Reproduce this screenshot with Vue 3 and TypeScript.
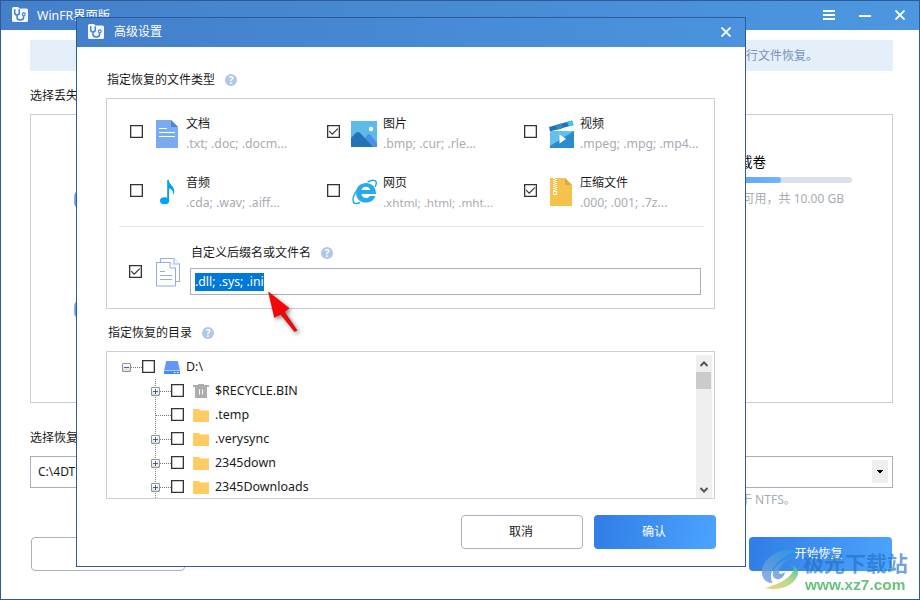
<script setup lang="ts">
interface FileType {
  icon: 'doc' | 'image' | 'video' | 'audio' | 'web' | 'zip'
  title: string
  exts: string
  checked: boolean
}

interface TreeNode {
  label: string
  kind: 'bin' | 'folder'
  expandable: boolean
}

const fileTypes: FileType[] = [
  { icon: 'doc', title: '文档', exts: '.txt; .doc; .docm...', checked: false },
  { icon: 'image', title: '图片', exts: '.bmp; .cur; .rle...', checked: true },
  { icon: 'video', title: '视频', exts: '.mpeg; .mpg; .mp4...', checked: false },
  { icon: 'audio', title: '音频', exts: '.cda; .wav; .aiff...', checked: false },
  { icon: 'web', title: '网页', exts: '.xhtml; .html; .mht...', checked: false },
  { icon: 'zip', title: '压缩文件', exts: '.000; .001; .7z...', checked: true },
]

const nodes: TreeNode[] = [
  { label: '$RECYCLE.BIN', kind: 'bin', expandable: true },
  { label: '.temp', kind: 'folder', expandable: false },
  { label: '.verysync', kind: 'folder', expandable: true },
  { label: '2345down', kind: 'folder', expandable: true },
  { label: '2345Downloads', kind: 'folder', expandable: true },
]
</script>

<template>
  <div class="window">
    <header class="titlebar">
      <svg class="logo" viewBox="0 0 16 16"><path d="M0 1.5Q0 0 1.5 0H6l1.500 1.500h7Q16 1.500 16 3v10.500Q16 15 14.500 15h-13Q0 15 0 13.500Z" fill="#f4f8fd" /><path d="M3.500 3H2.700v2.500a2.300 2.500 0 0 0 4.600 0V3H6.500M5 8v2.200a3.300 2.800 0 0 0 6.600 0V8.500" fill="none" stroke="#3e83d4" stroke-width="1.500" /><circle cx="11.800" cy="7.300" r="1.400" fill="none" stroke="#3e83d4" stroke-width="1.100" /></svg>
      <span class="titletext main-title">WinFR界面版</span>
      <svg class="menu" viewBox="0 0 12 10"><path d="M0 1h12M0 5h12M0 9h12" stroke="#fff" stroke-width="2" /></svg>
      <svg class="mini" viewBox="0 0 12 10"><path d="M0 6h12" stroke="#fff" stroke-width="2" /></svg>
      <svg class="close" viewBox="0 0 10 10"><path d="M.5.5l9 9M9.500.5l-9 9" stroke="#fff" stroke-width="1.900" /></svg>
    </header>

    <main class="content">
      <div class="banner">进行文件恢复。</div>
      <div class="label lost">选择丢失</div>
      <section class="volumes">
        <div class="drives"><i></i><i></i></div>
        <div class="volume">
          <div class="vname">下载卷</div>
          <div class="bar"><span></span></div>
          <div class="vsize">可用，共 10.00 GB</div>
        </div>
      </section>
      <div class="label target">选择恢复</div>
      <div class="combo"><span>C:\4DT</span><b><svg viewBox="0 0 6 3"><path d="M0 0h6v1H5v1H4v1H2V2H1V1H0z" /></svg></b></div>
      <div class="hint">于 NTFS。</div>
      <footer class="actions">
        <button class="btn back"></button>
        <button class="btn primary start">开始恢复</button>
      </footer>
    </main>

    <div class="dialog">
      <header class="titlebar dialog-bar">
        <svg class="logo" viewBox="0 0 16 16"><path d="M0 1.500Q0 0 1.500 0H6l1.500 1.500h7Q16 1.500 16 3v10.500Q16 15 14.500 15h-13Q0 15 0 13.500Z" fill="#f4f8fd" /><path d="M3.500 3H2.700v2.500a2.300 2.500 0 0 0 4.600 0V3H6.500M5 8v2.200a3.300 2.800 0 0 0 6.600 0V8.500" fill="none" stroke="#3e83d4" stroke-width="1.500" /><circle cx="11.800" cy="7.300" r="1.400" fill="none" stroke="#3e83d4" stroke-width="1.100" /></svg>
        <span class="titletext">高级设置</span>
        <svg class="close" viewBox="0 0 10 10"><path d="M.5.5l9 9M9.500.5l-9 9" stroke="#fff" stroke-width="1.900" /></svg>
      </header>

      <div class="dialog-body">
        <div class="label heading">指定恢复的文件类型<span class="help">?</span></div>

        <section class="types">
          <div class="grid">
            <div v-for="t in fileTypes" :key="t.title" class="type">
              <span class="check"><svg v-if="t.checked" viewBox="0 0 11 11"><path d="M1.200 5.200l3 3L9.800 2.600" fill="none" stroke="#333" stroke-width="1.200" /></svg></span>
              <div class="icon">
                <svg v-if="t.icon === 'doc'" width="22" height="28" viewBox="0 0 22 28"><path d="M0 0h15l7 7v21H0z" fill="#7aaaf0" /><path d="M15 0l7 7h-7z" fill="#4a86d6" /><path d="M3 8.500h8M3 12.500h16M3 16.500h16" stroke="#fff" /></svg>
                <svg v-else-if="t.icon === 'image'" class="i-image" width="26" height="26" viewBox="0 0 26 26"><path d="M0 0h26v26H0z" fill="#5bbce8" /><path d="M8 26l8-11.500q2-3 4 0L26 22v4z" fill="#4a8fe8" /><path d="M0 17l5-5.200q2-1.600 4 0L22 26H0z" fill="#2672b6" /><circle cx="20" cy="8" r="2.200" fill="#fff" /></svg>
                <svg v-else-if="t.icon === 'video'" class="i-video" width="25" height="28" viewBox="0 0 25 28"><path d="M0 7l23-6.500 1.500 4.500L1 11.500z" fill="#2672b6" /><path d="M7 5l5.500-1.500.5 5-5 1.500z" fill="#2f8bd2" /><path d="M18 1.900l5-1.400 1.500 4.500-4.500 1.300z" fill="#3fc4e8" /><path d="M1 11h24v17H1z" fill="#2b8bd0" /><path d="M1 11h24L1 26z" fill="#62c2ea" /><path d="M10.500 14.500l6.500 4.500-6.500 4.500z" fill="#fff" /></svg>
                <svg v-else-if="t.icon === 'audio'" class="i-audio" width="15" height="26" viewBox="0 0 15 26"><ellipse cx="4.600" cy="21.800" rx="4.600" ry="3.500" fill="#00a0fb" /><path d="M7.200 1h1.600c0 4.500 6 6 5.500 12-.1 1-.4 2-1 3 .3-4.500-2-6-4.200-6.500V21.500H7.200z" fill="#00a0fb" /></svg>
                <svg v-else-if="t.icon === 'web'" class="i-web" width="26" height="26" viewBox="0 0 26 26"><path d="M24 15H9.500c.3 4.600 6.500 5.200 8.200 2h5.800C20.500 26.500 4 26 4 13.800 4 .8 24.500 0 24 15zM9.500 11h8.700c-.3-4.500-8.200-4.500-8.700 0z" fill="#28aaea" fill-rule="evenodd" /><path d="M15.500 3C22-.5 26.500 1 23 8M6 10C-.5 18-1.500 27.500 8 23.500" fill="none" stroke="#28aaea" stroke-width="1.500" /></svg>
                <svg v-else class="i-zip" width="22" height="28" viewBox="0 0 22 28"><path d="M0 0h15l7 7v21H0z" fill="#f5c34c" /><path d="M15 0l7 7h-7z" fill="#d9ac48" /><path d="M4 0v13" stroke="#fff" stroke-width="2" stroke-dasharray="1 1" /><path d="M6 1v13" stroke="#fff" stroke-width="2" stroke-dasharray="1 1" /><path d="M3.500 13.500h3v3h-3z" fill="none" stroke="#fff" /></svg>
              </div>
              <div class="text"><div class="name">{{ t.title }}</div><div class="exts" :class="'exts-' + t.icon">{{ t.exts }}</div></div>
            </div>
          </div>
          <div class="custom">
            <span class="check"><svg viewBox="0 0 11 11"><path d="M1.200 5.200l3 3L9.800 2.600" fill="none" stroke="#333" stroke-width="1.200" /></svg></span>
            <svg class="files" width="25" height="29" viewBox="0 0 25 29"><g fill="#fff" stroke="#8fb0dc"><path d="M4.500 4V.5h13.500l5.500 5.500v17.500h-4" /><path d="M18 .5v5.500h5.500" /><path d="M.5 4.500H14l5.500 5.500v18H.5z" /><path d="M14 4.500v5.500h5.500M4 13.500h5M4 17.500h12M4 21.500h12" /></g></svg>
            <div class="custom-main">
              <div class="label">自定义后缀名或文件名<span class="help">?</span></div>
              <div class="input"><span>.dll; .sys; .ini</span></div>
            </div>
          </div>
        </section>

        <div class="label dirs">指定恢复的目录<span class="help">?</span></div>

        <section class="tree">
          <div class="rows">
            <div class="row root">
              <span class="expander minus"></span><span class="dots"></span><span class="check"></span>
              <svg class="drive" width="16" height="13" viewBox="0 0 16 13"><path d="M2.200 0h11.600L16 9.500H0z" fill="#6794fa" /><path d="M0 10h16v3H0z" fill="#3b90f5" /><path d="M10 11.500h1.500M13 11.500h1.500" stroke="#fff" /></svg>
              <span class="node">D:\</span>
            </div>
            <div class="children">
              <div v-for="n in nodes" :key="n.label" class="row">
                <span v-if="n.expandable" class="expander"></span><span v-else class="branch"></span>
                <span class="dots"></span><span class="check"></span>
                <svg v-if="n.kind === 'bin'" class="bin" width="16" height="14" viewBox="0 0 16 14"><path d="M5 0h6v1h5v2h-2v11H2V3H0V1h5z" fill="#adadad" /><path d="M6.500 5.500v5M9.500 5.500v5" stroke="#fff" /></svg>
                <svg v-else class="folder" width="16" height="13" viewBox="0 0 16 13"><path d="M0 0h6l1.500 1.500H16V13H0z" fill="#ffcb63" /></svg>
                <span class="node">{{ n.label }}</span>
              </div>
            </div>
          </div>
          <div class="scroll">
            <svg viewBox="0 0 8 6"><path d="M.5 5L4 1.500 7.500 5" fill="none" stroke="#555" stroke-width="2" /></svg>
            <div class="thumb"></div>
            <svg class="down" viewBox="0 0 8 6"><path d="M.5 1L4 4.500 7.500 1" fill="none" stroke="#555" stroke-width="2" /></svg>
          </div>
        </section>

        <footer class="dialog-actions">
          <button class="btn">取消</button>
          <button class="btn primary">确认</button>
        </footer>
      </div>
    </div>

    <svg class="arrow" width="44" height="52" viewBox="0 0 44 52"><path d="M3.500 1L24 17.200 19.300 20.700 32 39.300 29.500 40.500 15.500 23 9.500 26.500z" fill="#f80606" stroke="#a80000" stroke-width=".5" /></svg>

    <div class="watermark">
      <svg width="40" height="42" viewBox="0 0 40 42">
        <defs>
          <linearGradient id="wmBlue" x1="0" y1="1" x2="1" y2="0"><stop offset="0" stop-color="#7f9fdc" /><stop offset="1" stop-color="#289bdc" /></linearGradient>
          <linearGradient id="wmGreen" x1="0" y1="1" x2="1" y2="0"><stop offset="0" stop-color="#e5cf62" /><stop offset=".5" stop-color="#b1d579" /><stop offset="1" stop-color="#3fb985" /></linearGradient>
        </defs>
        <path d="M39 2C17-4-1 12 1 25c1 6 5 9 11 9-7-9 4-27 27-32z" fill="url(#wmBlue)" />
        <path d="M30 8C18 12 10 20 12 27c3 6 11 3 12-4-4 3-6 2-6 0 0-5 5-10 12-15z" fill="url(#wmBlue)" />
        <path d="M27 17c5-1 7 1 5 5-5 9-15 13-28 17C19 43 34 36 37 25c1-6-4-10-10-8z" fill="url(#wmGreen)" />
      </svg>
      <div class="wm-text"><div class="wm-name">极光下载站</div><div class="wm-url">www.xz7.com</div></div>
    </div>
  </div>
</template>

<style>
body { margin: 0; background: #fff; }
</style>

<style scoped>
* { box-sizing: border-box; }
svg { display: block; flex: none; }
.window { position: relative; width: 920px; height: 600px; overflow: hidden; border: 1px solid #2c5b98; background: #fff; font: 12px/16px "Noto Sans", "Noto Sans CJK SC", sans-serif; color: #1a1a1a; }
.titlebar { height: 29px; display: flex; align-items: center; background: linear-gradient(100deg, #447fca, #4c97e0); color: #fff; padding: 0 14px 1px 11px; }
.logo { width: 16px; height: 16px; margin-right: 9px; }
.titletext { flex: 1; white-space: nowrap; }
.main-title { font-size: 12.300px; padding-top: 1px; }
.menu { width: 12px; height: 10px; margin-right: 24px; }
.mini { width: 12px; height: 10px; margin-right: 24px; }
.close { width: 10px; height: 10px; }
.content { padding: 10px 26px 0 29px; }
.banner { height: 31px; background: #e4effa; color: #7893bb; line-height: 32px; text-align: right; padding-right: 75px; }
.label { display: flex; align-items: center; height: 16px; white-space: nowrap; }
.lost { margin-top: 17px; }
.volumes { margin-top: 10px; height: 289px; border: 1px solid #cdced3; display: flex; justify-content: space-between; }
.drives { padding: 73px 0 0 43px; display: flex; flex-direction: column; gap: 90px; }
.drives i { width: 20px; height: 20px; border-radius: 9px 3px 3px 5px; background: linear-gradient(90deg, #8ec2fc, #2f7bde 3px); }
.volume { width: 152px; padding-top: 38px; margin-right: 40px; }
.vname { width: 66px; text-align: right; font-size: 13.500px; line-height: 18px; color: #000; }
.bar { height: 6px; margin-top: 6px; background: #d9e2ea; border-radius: 3px; }
.bar span { display: block; width: 81px; height: 6px; border-radius: 3px; background: linear-gradient(90deg, #4c96f2, #73b5ff); }
.vsize { margin-top: 8px; padding-right: 8px; text-align: right; color: #a7abb4; white-space: nowrap; }
.target { margin-top: 27px; }
.combo { margin-top: 10px; height: 32px; border: 1px solid #abadbd; display: flex; align-items: center; justify-content: space-between; padding: 0 4px 0 7px; }
.combo b { width: 16px; height: 23px; background: #efefef; display: flex; align-items: center; justify-content: center; margin-bottom: 1px; }
.combo svg { width: 6px; height: 3px; }
.hint { margin: 4px 0 0 710px; color: #a7abb4; white-space: nowrap; }
.actions { margin: 29px 0 0 1px; width: 861px; display: flex; justify-content: space-between; }
.btn { width: 122px; height: 34px; padding: 0 2px 0 0; border: 1px solid #a9b0b9; border-radius: 4px; background: #fff; font: inherit; color: #1a1a1a; }
.primary { border: 0; color: #fff; background: linear-gradient(100deg, #2f7de5, #4ca4ff); }
.back { width: 154px; }
.start { width: 143px; padding-right: 4px; }

.dialog { position: absolute; left: 75px; top: 16px; width: 670px; height: 550px; background: #fff; border: 1px solid #2c5b98; }
.dialog-bar { padding: 0 14px 1px 11px; background: linear-gradient(100deg, #447fca, #4b93de); }
.dialog-bar .titletext { padding-left: 1px; }
.dialog-body { padding: 0 30px 0 29px; }
.help { width: 12px; height: 12px; margin-left: 10px; border-radius: 50%; background: #b0c7e9; color: #fff; font: bold 10px/12px "Open Sans", sans-serif; text-align: center; }
.heading { margin: 25px 0 0 1px; }
.types { margin-top: 10px; height: 211px; border: 1px solid #cdced3; }
.grid { display: grid; grid-template-columns: repeat(3, 197px); grid-auto-rows: 59px; height: 128px; padding: 15px 0 0 23px; margin-right: 10px; }
.type { display: flex; align-items: flex-start; }
.check { flex: none; width: 13px; height: 13px; border: 1px solid #333; background: #fff; box-shadow: inset 0 0 0 .3px #333; }
.type .check { margin-top: 11px; }
.check svg { width: 11px; height: 11px; }
.icon { width: 43px; height: 34px; padding: 6px 0 0 13px; }
.i-image { margin: 1px 0 0 -2px; }
.i-video { margin-left: -1px; }
.i-audio { margin-left: 4px; }
.i-web { margin-left: -1px; }
.i-zip { margin-top: -1px; }
.text { white-space: nowrap; padding-top: 2px; }
.exts { margin-top: 4px; color: #a9abb3; font-size: 12.250px; }
.exts-web { font-size: 11.650px; }
.custom { display: flex; margin: -1px 10px 0 12px; border-top: 1px solid #e8e8eb; }
.custom > .check { margin: 38px 0 0 10px; }
.files { margin: 31px 0 0 14px; }
.custom-main { margin: 18px 3px 0 9px; flex: 1; }
.custom-main .label { padding-left: 1px; }
.input { margin-top: 7px; height: 27px; border: 1px solid #abadbd; padding: 4px; }
.input span { display: inline-block; height: 18px; line-height: 18px; background: #0078d7; color: #fff; font-size: 12.300px; }
.dirs { margin: 16px 0 0 2px; }
.tree { margin-top: 10px; height: 148px; border: 1px solid #cdced3; display: flex; justify-content: space-between; padding: 3px 2px 0 15px; overflow: hidden; }
.row { display: flex; align-items: flex-start; height: 24px; }
.row .check { margin-top: 5px; }
.expander { flex: none; width: 9px; height: 9px; margin-top: 8px; border: 1px solid #919191; border-radius: 1px; background: linear-gradient(#3d5fb0, #3d5fb0) center / 5px 1px no-repeat, linear-gradient(#3d5fb0, #3d5fb0) center / 1px 5px no-repeat, linear-gradient(#fff, #ddd); }
.minus { background: linear-gradient(#3d5fb0, #3d5fb0) center / 5px 1px no-repeat, linear-gradient(#fff, #ddd); }
.dots { width: 11px; height: 1px; margin-top: 12px; background: repeating-linear-gradient(90deg, #777 0 1px, transparent 1px 2px); }
.branch { width: 9px; height: 1px; margin-top: 12px; background: repeating-linear-gradient(90deg, transparent 0 1px, #777 1px 2px) 4px 0 / 5px 1px no-repeat; }
.children { padding-left: 29px; height: 120px; background: repeating-linear-gradient(#777 0 1px, transparent 1px 2px) 33px 0 / 1px 120px no-repeat; }
.drive { margin: 6px 6px 0 9px; }
.bin { margin: 5px 6px 0 9px; }
.folder { margin: 6px 6px 0 9px; }
.node { font-size: 12.450px; line-height: 23px; white-space: nowrap; }
.scroll { width: 16px; height: 143px; background: #efefef; display: flex; flex-direction: column; align-items: center; }
.scroll svg { width: 8px; height: 6px; margin: 6px 1px 0 0; }
.thumb { width: 15px; height: 17px; margin: 5px 1px 0 0; background: #cbcbcb; }
.scroll .down { margin: auto 1px 5px 0; }
.dialog-actions { display: flex; justify-content: flex-end; gap: 11px; margin: 16px -1px 0 0; }

.arrow { position: absolute; left: 264px; top: 290px; filter: drop-shadow(2px 2px 2px rgba(0, 0, 0, .5)); }
.watermark { position: absolute; left: 760px; top: 548px; display: flex; opacity: .85; }
.wm-text { margin-left: 2px; white-space: nowrap; }
.wm-name { font: bold 21px/26px "Noto Sans CJK SC", sans-serif; color: rgba(35, 112, 190, .75); }
.wm-url { font: bold 15.400px/20px "Liberation Sans", sans-serif; color: #4cb963; margin: 0 0 0 2px; }
</style>
